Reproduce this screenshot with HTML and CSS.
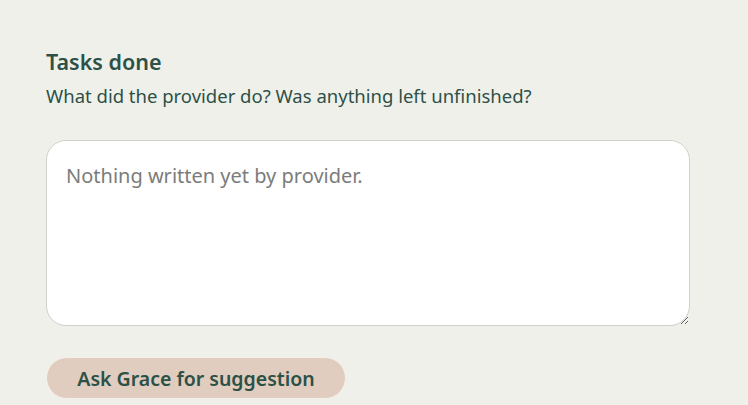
FILE: index.html
```html
<!DOCTYPE html>
<html>
<head>
<meta charset="utf-8">
<link rel="stylesheet" href="styles.css">
</head>
<body>
<div class="section">
  <h2 class="title">Tasks done</h2>
  <p class="subtitle">What did the provider do? Was anything left unfinished?</p>
  <textarea class="notes" placeholder="Nothing written yet by provider."></textarea>
  <button class="ask">Ask Grace for suggestion</button>
</div>
</body>
</html>
```
FILE: styles.css
```css
html, body {
  margin: 0;
  padding: 0;
  background: #f0f0eb;
}
body {
  font-family: "Noto Sans", "Open Sans", sans-serif;
  color: #2d5047;
}
.section {
  display: flex;
  flex-direction: column;
  align-items: flex-start;
  padding: 48px 58px 0 46px;
}
.title {
  margin: 0;
  font-size: 21.5px;
  font-weight: 600;
  line-height: 28px;
}
.subtitle {
  margin: 7px 0 0;
  font-size: 18.5px;
  line-height: 26px;
}
.notes {
  margin-top: 31px;
  box-sizing: border-box;
  width: 644px;
  height: 186px;
  border: 1px solid #cfcfcb;
  border-radius: 20px;
  background: #fff;
  padding: 22px 19px;
  font-family: inherit;
  font-size: 20px;
  line-height: 26px;
  color: #2d5047;
  resize: vertical;
  outline: none;
}
.notes::placeholder {
  color: #7c7c7c;
}
.ask {
  margin-top: 31px;
  box-sizing: border-box;
  width: 300px;
  height: 42px;
  border: 1px solid #f5f0ea;
  border-radius: 21px;
  background: #e0cdbf;
  font-family: inherit;
  font-size: 19.5px;
  font-weight: 600;
  color: #2d5047;
  padding: 0;
}
```
